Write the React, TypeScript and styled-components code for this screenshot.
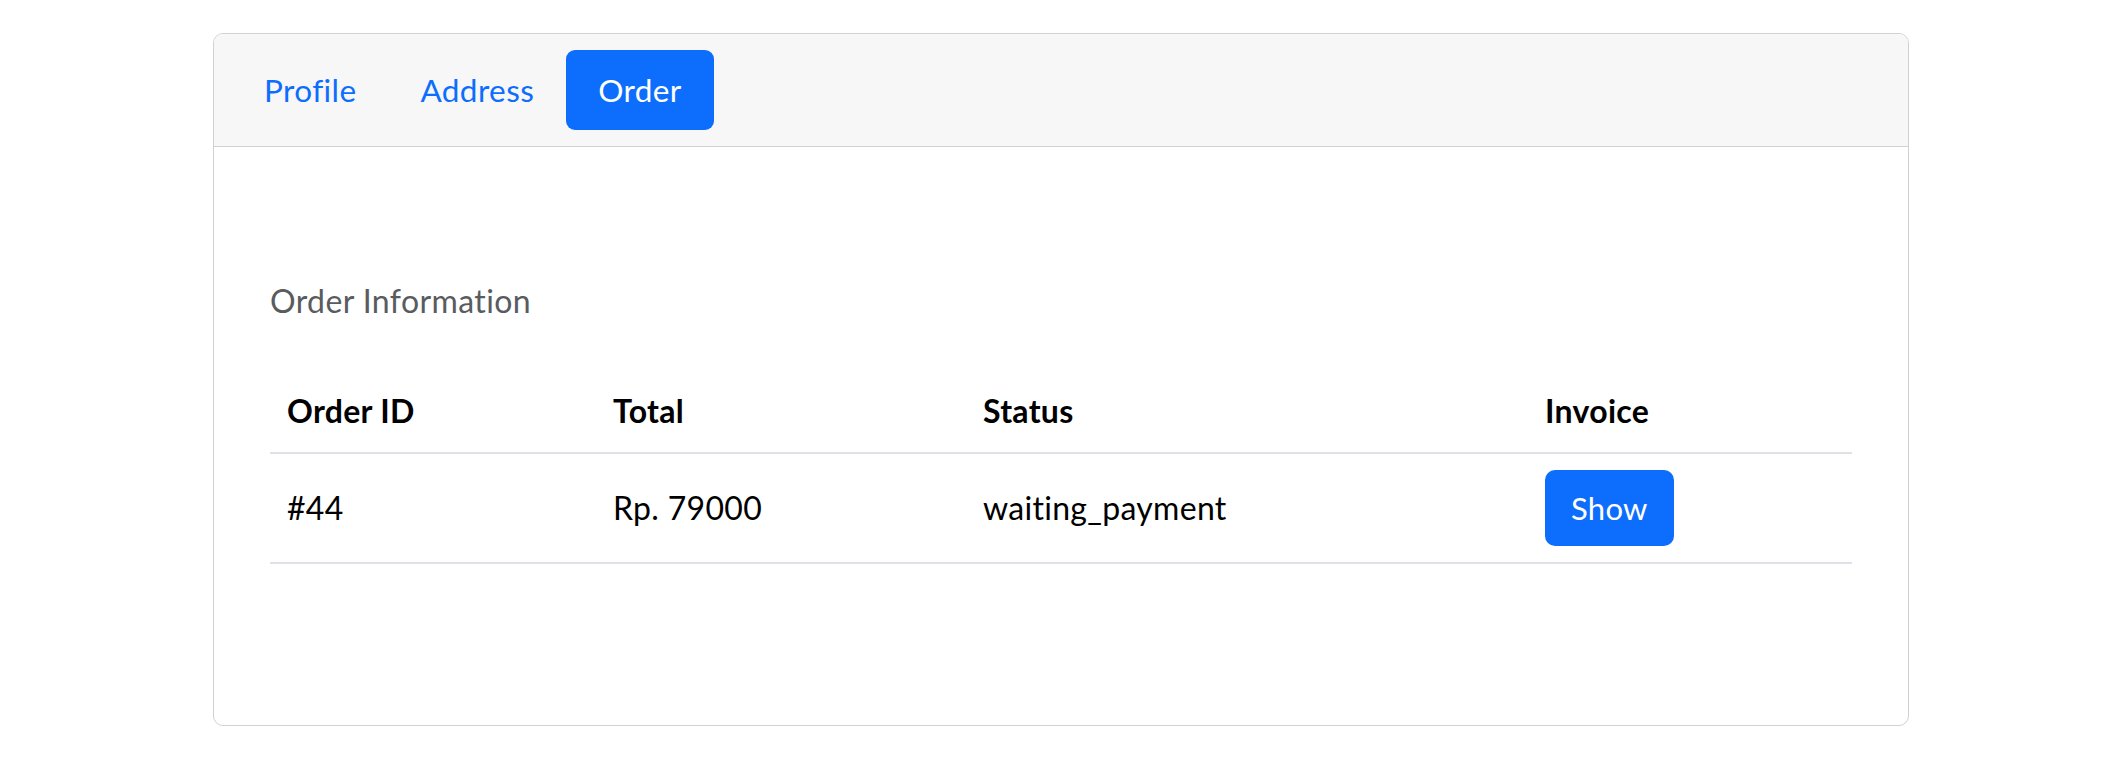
import React, { useState } from "react";
import styled, { createGlobalStyle } from "styled-components";

const GlobalStyle = createGlobalStyle`
  html, body { margin: 0; padding: 0; background: #ffffff; }
  body { font-family: "Lato", "Noto Sans", sans-serif; color: #000; }
  * { box-sizing: border-box; }
`;

const Page = styled.div`
  display: flex;
  justify-content: center;
  padding-top: 33px;
`;

const Card = styled.section`
  width: 1696px;
  border: 1.5px solid #d1d1d1;
  border-radius: 10px;
  overflow: hidden;
  background: #fff;
`;

const CardHeader = styled.nav`
  display: flex;
  align-items: center;
  padding: 16px 18px;
  background: #f7f7f7;
  border-bottom: 1.5px solid #d1d1d1;
`;

const Tab = styled.button<{ $active?: boolean }>`
  font-family: inherit;
  font-size: 31.5px;
  letter-spacing: 0.4px;
  line-height: 48px;
  padding: 16px 32px;
  border: none;
  border-radius: 9px;
  cursor: pointer;
  background: ${(p) => (p.$active ? "#0d6efd" : "transparent")};
  color: ${(p) => (p.$active ? "#ffffff" : "#0d6efd")};
`;

const CardBody = styled.div`
  padding: 130px 57px 161px 56px;
`;

const Heading = styled.h5`
  margin: 0 0 45px;
  font-size: 32px;
  letter-spacing: 0.4px;
  line-height: 48px;
  font-weight: 400;
  color: #595c5f;
`;

const Table = styled.table`
  width: 100%;
  border-collapse: collapse;
  table-layout: fixed;
  font-size: 32px;
  letter-spacing: 0.3px;
  line-height: 48px;
`;

const HeadCell = styled.th<{ $w: number }>`
  width: ${(p) => p.$w}px;
  text-align: left;
  font-weight: 700;
  padding: 17px;
  border-bottom: 2px solid #dee2e6;
`;

const Cell = styled.td`
  padding: 16px 17px;
  border-bottom: 2px solid #dee2e6;
  vertical-align: middle;
`;

const ShowButton = styled.button`
  font-family: inherit;
  font-size: 31px;
  letter-spacing: 0.3px;
  line-height: 48px;
  padding: 14px 26px;
  border: none;
  border-radius: 10px;
  background: #0d6efd;
  color: #fff;
  cursor: pointer;
`;

const tabs = ["Profile", "Address", "Order"];

export default function App() {
  const [active, setActive] = useState("Order");
  return (
    <>
      <GlobalStyle />
      <Page>
        <Card>
          <CardHeader>
            {tabs.map((t) => (
              <Tab key={t} $active={active === t} onClick={() => setActive(t)}>
                {t}
              </Tab>
            ))}
          </CardHeader>
          <CardBody>
            <Heading>Order Information</Heading>
            <Table>
              <thead>
                <tr>
                  <HeadCell $w={326}>Order ID</HeadCell>
                  <HeadCell $w={370}>Total</HeadCell>
                  <HeadCell $w={562}>Status</HeadCell>
                  <HeadCell $w={324}>Invoice</HeadCell>
                </tr>
              </thead>
              <tbody>
                <tr>
                  <Cell>#44</Cell>
                  <Cell>Rp. 79000</Cell>
                  <Cell>waiting_payment</Cell>
                  <Cell>
                    <ShowButton>Show</ShowButton>
                  </Cell>
                </tr>
              </tbody>
            </Table>
          </CardBody>
        </Card>
      </Page>
    </>
  );
}
